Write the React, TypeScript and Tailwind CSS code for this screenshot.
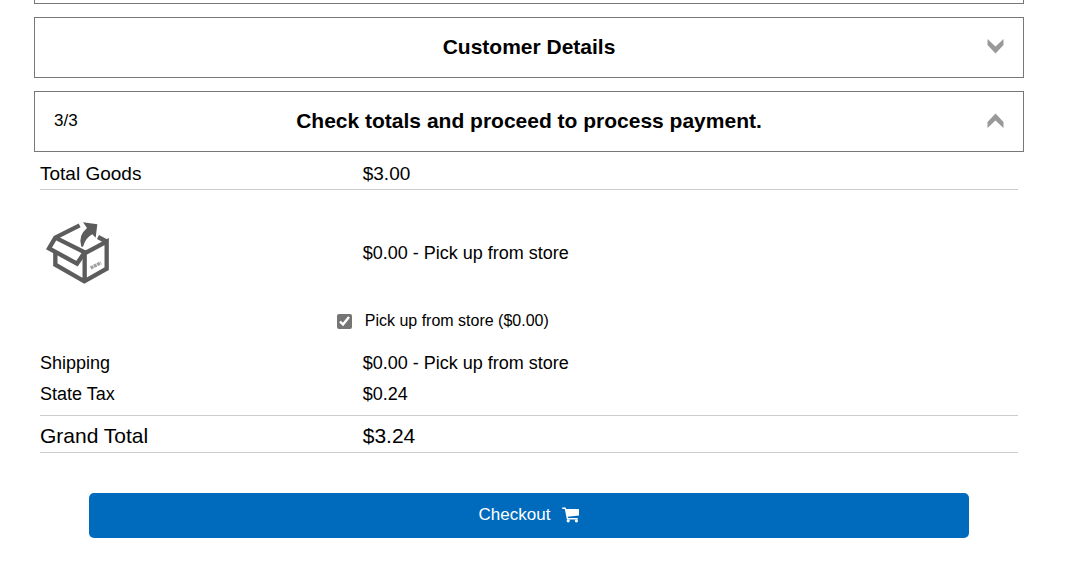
const Chevron = ({ up = false }: { up?: boolean }) => (
  <svg
    viewBox="0 0 17 15"
    className={up ? "w-[17px] h-[15px] rotate-180" : "w-[17px] h-[15px]"}
    fill="#999999"
    aria-hidden="true"
  >
    <path d="M0.5 0 L8.5 7.5 L16.5 0 V6 L8.5 14.5 L0.5 6 Z" />
  </svg>
);

const BoxIcon = () => (
  <svg viewBox="30 30 198 195" className="w-[66px] h-[65px]" fill="none" aria-hidden="true">
    <g stroke="#5c5c5c" strokeWidth="13">
      <path d="M134 43 L61 80 L42 112 L126 158 L149 124 L61 80" />
      <path d="M61 122 V161 L148 211 L215 173 V92 L149 127 V212" />
      <path d="M217 93 L189 78" />
    </g>
    <path d="M144 34 L187 40 L182 80 L172 70 Q152 80 144 107 H139 Q128 74 156 51 Z" fill="#5c5c5c" />
    <path d="M167 171 L198 155" stroke="#a0a0a0" strokeWidth="10" strokeDasharray="9 2" />
  </svg>
);

const CartIcon = () => (
  <svg viewBox="0 0 17 16" className="w-[17px] h-4" fill="white" aria-hidden="true">
    <path d="M0 0.5 H3.6 L4.2 2 H17 V8.4 L5.8 9.8 L6.1 11 H15.8 V12.4 H4.9 L2.8 2 H0.5 Z" />
    <circle cx="6.2" cy="13.8" r="1.6" />
    <circle cx="14.4" cy="13.8" r="1.6" />
  </svg>
);

type StepProps = {
  title: string;
  count?: string;
  open?: boolean;
};

const StepHeader = ({ title, count, open = false }: StepProps) => (
  <h2 className="mt-[13px]">
    <button
      type="button"
      aria-expanded={open}
      className="grid h-[61px] w-full grid-cols-[80px_1fr_80px] items-center border border-[#777777] px-[19px] pb-[2px]"
    >
      <span className="text-left text-[17px]">{count}</span>
      <span className="text-[21px] font-bold">{title}</span>
      <span className="flex justify-end">
        <Chevron up={open} />
      </span>
    </button>
  </h2>
);

const App = () => {
  return (
    <main className="bg-white pr-[41px] pl-[34px] font-['Liberation_Sans',Arial,sans-serif] text-black">
      <div className="h-1 border border-t-0 border-[#777777]" />
      <StepHeader title="Customer Details" />
      <StepHeader title="Check totals and proceed to process payment." count="3/3" open />

      <section className="px-[6px]">
        <dl className="grid grid-cols-[33%_1fr] border-b border-[#cccccc] pt-[10px] pb-[3px] text-[19px] leading-6">
          <dt>Total Goods</dt>
          <dd>$3.00</dd>
        </dl>

        <div className="grid grid-cols-[33%_1fr] items-center pt-[31px] text-[18px]">
          <div className="pl-[5px]">
            <BoxIcon />
          </div>
          <p>$0.00 - Pick up from store</p>
        </div>

        <div className="mt-[23px] grid grid-cols-[33%_1fr]">
          <label className="col-start-2 -ml-[26px] flex items-center gap-[13px] text-base leading-6">
            <input type="checkbox" defaultChecked className="size-[15px] accent-[#757575]" />
            Pick up from store ($0.00)
          </label>
        </div>

        <dl className="mt-[15px] mb-[5px] grid grid-cols-[33%_1fr] text-[18px] leading-[31px]">
          <dt>Shipping</dt>
          <dd>$0.00 - Pick up from store</dd>
          <dt>State Tax</dt>
          <dd>$0.24</dd>
        </dl>

        <dl className="grid grid-cols-[33%_1fr] border-y border-[#cccccc] pt-2 pb-1 text-[21px] leading-6">
          <dt>Grand Total</dt>
          <dd>$3.24</dd>
        </dl>

        <button
          type="button"
          className="mx-auto mt-10 flex h-[45px] w-[90%] items-center justify-center gap-3 rounded-[5px] bg-[#006bbd] pb-[2px] text-[17px] text-white"
        >
          Checkout
          <CartIcon />
        </button>
      </section>
    </main>
  );
};

export default App;
